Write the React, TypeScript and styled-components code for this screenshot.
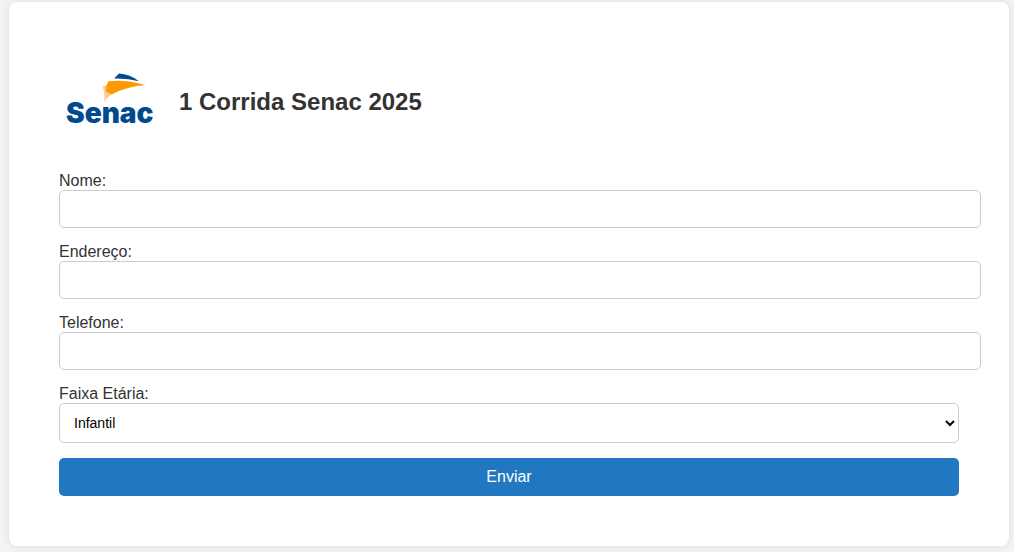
import React from "react";
import styled, { createGlobalStyle, css } from "styled-components";

const GlobalStyle = createGlobalStyle`
  body {
    margin: 0;
    background: #f4f4f4;
    color: #333;
    font-family: Arial, "Liberation Sans", sans-serif;
    font-size: 16px;
    line-height: 18px;
  }
`;

const Page = styled.main`
  padding: 2px 5px 6px 9px;
`;

const Card = styled.section`
  padding: 50px;
  background: #fff;
  border-radius: 8px;
  box-shadow: 0 0 10px rgba(0, 0, 0, 0.1);
`;

const Header = styled.header`
  display: flex;
  align-items: center;
  gap: 20px;
  margin-bottom: 20px;
`;

const Logo = styled.svg`
  flex: none;
  width: 100px;
  height: 100px;
`;

const Wordmark = styled.text`
  font-family: Inter, sans-serif;
  font-size: 28px;
  font-weight: 900;
  fill: #004a8d;
`;

const Title = styled.h1`
  margin: 0;
  font-size: 24px;
  line-height: 28px;
`;

const Form = styled.form`
  display: flex;
  flex-direction: column;
  gap: 15px;
`;

const Field = styled.div`
  display: flex;
  flex-direction: column;
`;

const control = css`
  margin: 0;
  padding: 10px;
  border: 1px solid #ccc;
  border-radius: 5px;
  background: #fff;
  font-family: inherit;
`;

const TextInput = styled.input`
  ${control}
  box-sizing: content-box;
  width: 100%;
  height: 16px;
  font-size: 16px;
`;

const Select = styled.select`
  ${control}
  box-sizing: border-box;
  width: 100%;
  height: 40px;
  color: #000;
  font-size: 14px;
`;

const SubmitButton = styled.button`
  padding: 10px;
  border: 0;
  border-radius: 5px;
  background: #2278c0;
  color: #fff;
  font-family: inherit;
  font-size: 16px;
  line-height: 18px;
  cursor: pointer;
`;

const textFields = [
  { id: "nome", label: "Nome:", type: "text" },
  { id: "endereco", label: "Endereço:", type: "text" },
  { id: "telefone", label: "Telefone:", type: "tel" },
];

function SenacLogo() {
  return (
    <Logo viewBox="0 0 100 100" role="img" aria-label="Senac">
      <path d="M55 26.500 L60 21.600 Q70 22 80 29.200 Q68 26 55 26.500Z" fill="#004a8d" />
      <path d="M43.500 34.500 L48 33 L53 42 Q48 45 45.500 50 Q46 41 43.500 34.500Z" fill="#ffc98c" />
      <path d="M49.500 29.300 Q66 27 86.500 33 Q69 34 52.500 42.500 L47 39.500 Q47 33 49.500 29.300Z" fill="#ff9900" />
      <Wordmark x="7" y="71">Senac</Wordmark>
    </Logo>
  );
}

export default function App() {
  return (
    <>
      <GlobalStyle />
      <Page>
        <Card>
          <Header>
            <SenacLogo />
            <Title>1 Corrida Senac 2025</Title>
          </Header>
          <Form onSubmit={(event) => event.preventDefault()}>
            {textFields.map(({ id, label, type }) => (
              <Field key={id}>
                <label htmlFor={id}>{label}</label>
                <TextInput id={id} name={id} type={type} />
              </Field>
            ))}
            <Field>
              <label htmlFor="faixa">Faixa Etária:</label>
              <Select id="faixa" name="faixa" defaultValue="infantil">
                <option value="infantil">Infantil</option>
                <option value="juvenil">Juvenil</option>
                <option value="adulto">Adulto</option>
              </Select>
            </Field>
            <SubmitButton type="submit">Enviar</SubmitButton>
          </Form>
        </Card>
      </Page>
    </>
  );
}
